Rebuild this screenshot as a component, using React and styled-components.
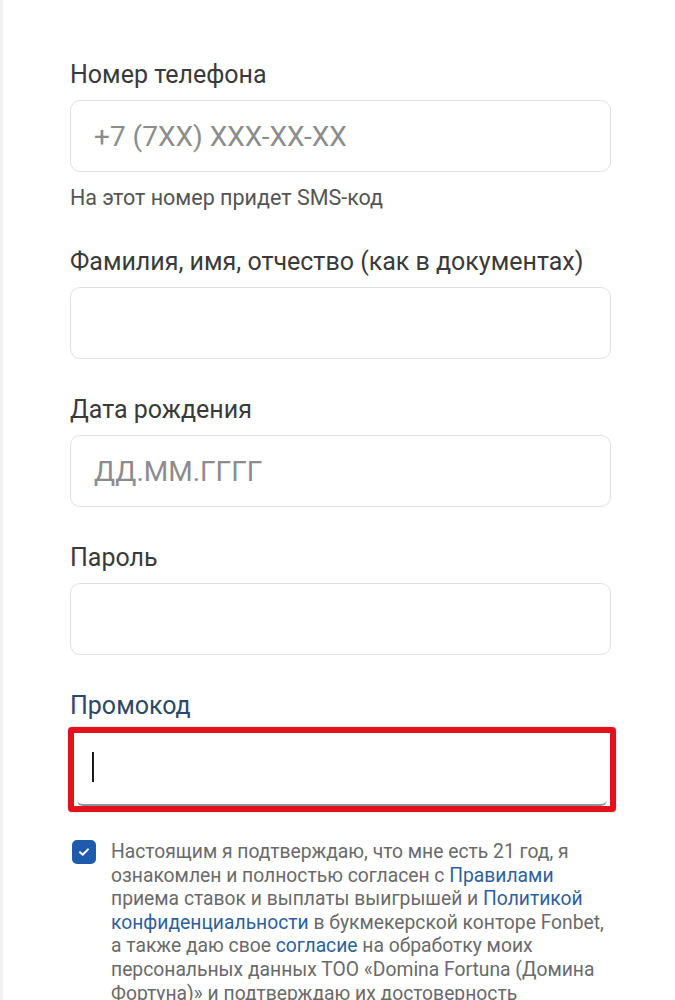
import React from 'react';
import styled, { createGlobalStyle } from 'styled-components';

const GlobalStyle = createGlobalStyle`
    html, body {
        margin: 0;
        padding: 0;
        background: #ffffff;
    }
    body {
        font-family: Roboto, "Liberation Sans", Arial, sans-serif;
        -webkit-font-smoothing: antialiased;
    }
`

const Page = styled.div`
    min-height: 1000px;
    border-left: 3px solid #f2f2f2;
    box-sizing: border-box;
    padding: 61px 64px 0 67px;
    overflow: hidden;
`

const Field = styled.div`
    display: flex;
    flex-direction: column;
    margin-bottom: ${props => props.gap || 37}px;
`

const Label = styled.label`
    font-size: 25px;
    line-height: 28px;
    color: ${props => props.accent ? '#2c4866' : '#3a3a3a'};
    margin-bottom: ${props => props.accent ? 7 : 11}px;
`

const Input = styled.input`
    box-sizing: border-box;
    width: 100%;
    height: 72px;
    border: 1.5px solid #e1e1e1;
    border-radius: 10px;
    padding: 0 23px;
    font-family: inherit;
    font-size: 28px;
    color: #333;
    background: #fff;
    outline: none;

    &::placeholder {
        color: #8c8c8c;
    }
`

const Hint = styled.div`
    font-size: 21.5px;
    line-height: 24px;
    color: #555;
    margin-top: 14px;
`

// red annotation frame drawn around the promo-code field
const Highlight = styled.div`
    margin: 0 -5px 0 -2px;
    border: 6px solid #e2111b;
    border-radius: 4px;
    box-shadow: 0 0 1px #e2111b;
`

const FocusedInput = styled.div`
    position: relative;
    box-sizing: border-box;
    height: 73px;
    margin: 0 3px;
    border-bottom: 2px solid #8d939c;
    border-radius: 0 0 6px 6px;
    background: #fff;
`

const Caret = styled.span`
    position: absolute;
    left: 15px;
    top: 19px;
    width: 2px;
    height: 30px;
    background: #1a1a1a;
`

const Consent = styled.div`
    display: flex;
    gap: 15px;
    align-items: flex-start;
    margin-left: 2px;
`

const Box = styled.span`
    flex: 0 0 24px;
    width: 24px;
    height: 24px;
    border-radius: 5px;
    background: #1e5bad;
    display: flex;
    align-items: center;
    justify-content: center;
`

const ConsentText = styled.p`
    margin: 0;
    font-size: 19.3px;
    line-height: 23.6px;
    color: #6a6a6a;
`

const TextLink = styled.a`
    color: #2f5f9c;
    text-decoration: none;
`

const App = () => {
    return (
        <>
            <GlobalStyle />
            <Page>
                <Field gap={38}>
                    <Label>Номер телефона</Label>
                    <Input placeholder="+7 (7XX) XXX-XX-XX" readOnly />
                    <Hint>На этот номер придет SMS-код</Hint>
                </Field>
                <Field>
                    <Label>Фамилия, имя, отчество (как в документах)</Label>
                    <Input readOnly />
                </Field>
                <Field>
                    <Label>Дата рождения</Label>
                    <Input placeholder="ДД.ММ.ГГГГ" readOnly />
                </Field>
                <Field>
                    <Label>Пароль</Label>
                    <Input type="password" readOnly />
                </Field>
                <Field gap={28}>
                    <Label accent>Промокод</Label>
                    <Highlight>
                        <FocusedInput>
                            <Caret />
                        </FocusedInput>
                    </Highlight>
                </Field>
                <Consent>
                    <Box>
                        <svg width="14" height="14" viewBox="0 0 14 14" fill="none">
                            <path d="M3 7.2l2.7 2.6L11 4.4" stroke="#fff" strokeWidth="2" strokeLinecap="round" strokeLinejoin="round" />
                        </svg>
                    </Box>
                    <ConsentText>
                        Настоящим я подтверждаю, что мне есть 21 год, я ознакомлен и полностью согласен с{' '}
                        <TextLink>Правилами</TextLink> приема ставок и выплаты выигрышей и{' '}
                        <TextLink>Политикой конфиденциальности</TextLink> в букмекерской конторе Fonbet,
                        а также даю свое <TextLink>согласие</TextLink> на обработку моих персональных
                        данных ТОО «Domina Fortuna (Домина Фортуна)» и подтверждаю их достоверность
                    </ConsentText>
                </Consent>
            </Page>
        </>
    );
};

export default App;
